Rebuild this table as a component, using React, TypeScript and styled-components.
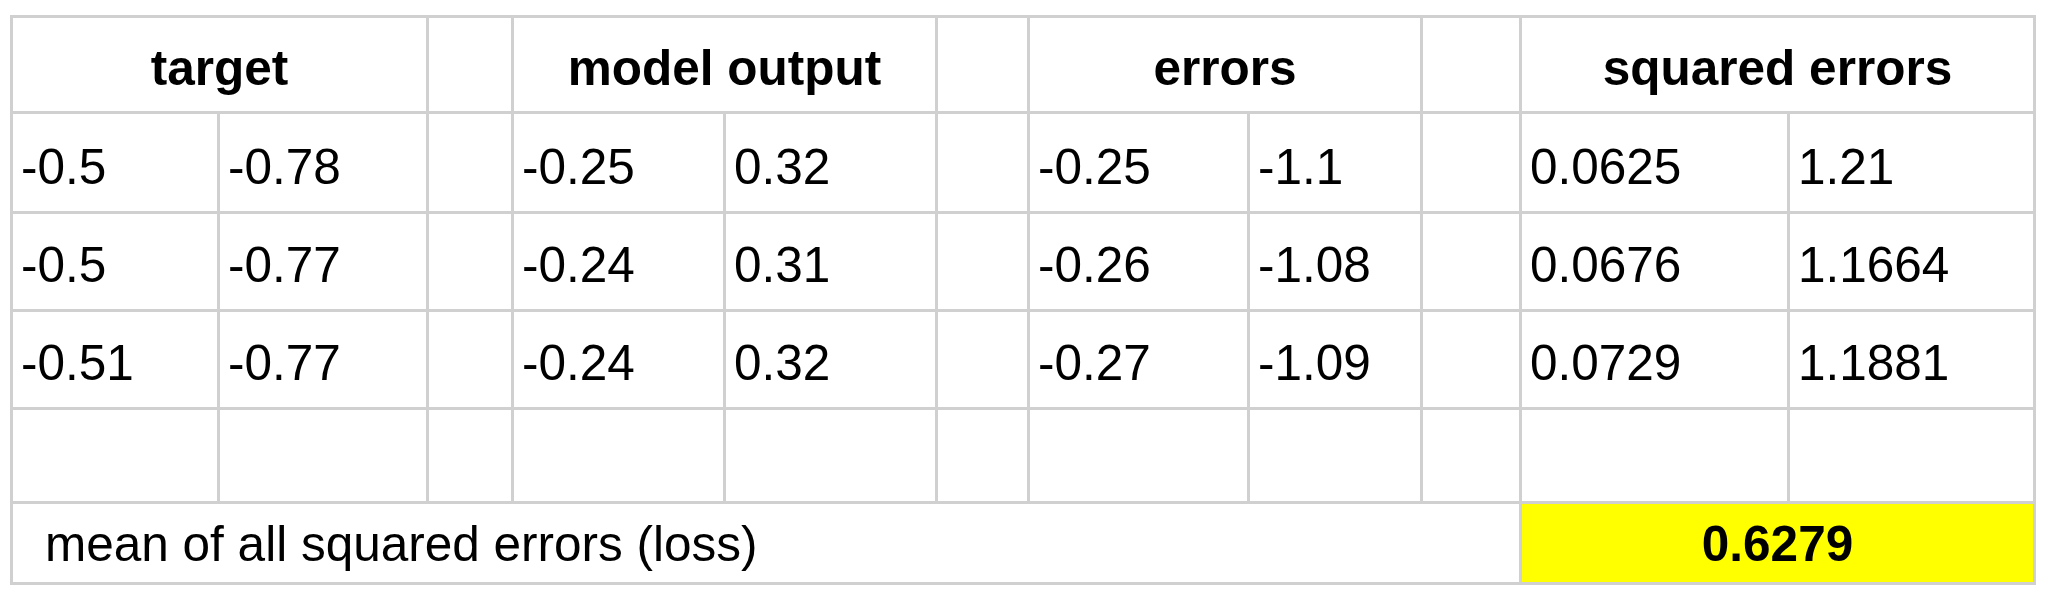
import React from "react";
import styled, { createGlobalStyle } from "styled-components";

const GlobalStyle = createGlobalStyle`
  html, body {
    margin: 0;
    padding: 0;
    background: #ffffff;
  }
  body {
    font-family: "Liberation Sans", Arial, sans-serif;
  }
`;

const Page = styled.div`
  padding: 15px 0 0 10px;
  width: 2048px;
  height: 597px;
  box-sizing: border-box;
  background: #ffffff;
`;

const Sheet = styled.div`
  display: inline-grid;
  grid-template-columns: 204px 206px 82px 209px 209px 89px 217px 170px 96px 265px 243px;
  grid-template-rows: 93px 97px 95px 95px 91px 78px;
  gap: 3px;
  padding: 3px;
  background: #d0d0d0;
  font-family: "Liberation Sans", Arial, sans-serif;
  font-size: 49.5px;
  color: #000000;
`;

const Cell = styled.div<{ $span?: number; $align?: "left" | "center"; $bold?: boolean; $fill?: string; $indent?: number }>`
  grid-column: span ${(p) => p.$span ?? 1};
  background: ${(p) => p.$fill ?? "#ffffff"};
  display: flex;
  align-items: flex-end;
  justify-content: ${(p) => (p.$align === "center" ? "center" : "flex-start")};
  padding: 0 0 15px ${(p) => p.$indent ?? 8}px;
  box-sizing: border-box;
  font-weight: ${(p) => (p.$bold ? 700 : 400)};
  line-height: 1.15;
  white-space: nowrap;
  overflow: hidden;
`;

const HeaderCell = styled(Cell).attrs({ $align: "center", $bold: true })`
  padding-left: 0;
  padding-bottom: 14px;
`;

const FooterCell = styled(Cell)`
  align-items: center;
  padding-bottom: 0;
  padding-top: 2px;
`;

const rows: string[][] = [
  ["-0.5", "-0.78", "", "-0.25", "0.32", "", "-0.25", "-1.1", "", "0.0625", "1.21"],
  ["-0.5", "-0.77", "", "-0.24", "0.31", "", "-0.26", "-1.08", "", "0.0676", "1.1664"],
  ["-0.51", "-0.77", "", "-0.24", "0.32", "", "-0.27", "-1.09", "", "0.0729", "1.1881"],
  ["", "", "", "", "", "", "", "", "", "", ""],
];

export default function App() {
  return (
    <>
      <GlobalStyle />
      <Page>
        <Sheet>
          <HeaderCell $span={2}>target</HeaderCell>
          <HeaderCell />
          <HeaderCell $span={2}>model output</HeaderCell>
          <HeaderCell />
          <HeaderCell $span={2}>errors</HeaderCell>
          <HeaderCell />
          <HeaderCell $span={2}>squared errors</HeaderCell>
          {rows.map((row, r) =>
            row.map((v, c) => <Cell key={`${r}-${c}`}>{v}</Cell>)
          )}
          <FooterCell $span={9} $indent={32}>
            mean of all squared errors (loss)
          </FooterCell>
          <FooterCell $span={2} $align="center" $bold $fill="#ffff00" $indent={0}>
            0.6279
          </FooterCell>
        </Sheet>
      </Page>
    </>
  );
}
